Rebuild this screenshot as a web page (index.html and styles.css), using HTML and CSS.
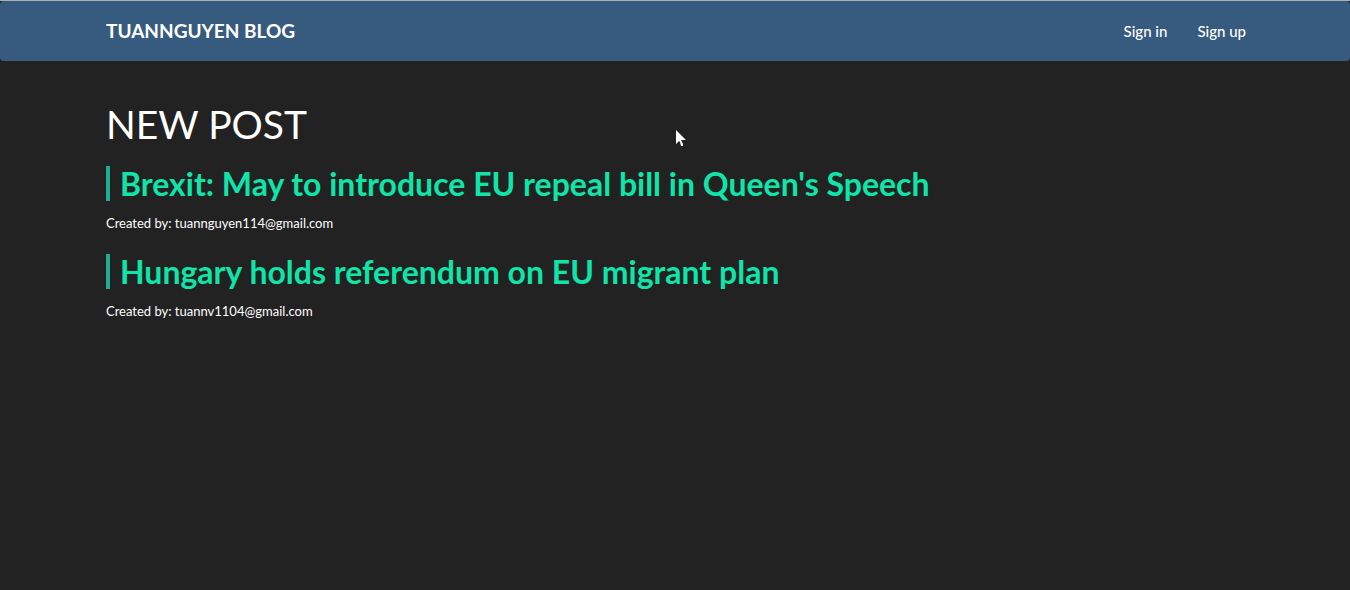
FILE: index.html
```html
<!DOCTYPE html>
<html lang="en">
<head>
<meta charset="utf-8">
<title>TuanNguyen Blog</title>
<link rel="stylesheet" href="styles.css">
</head>
<body>
<header class="navbar">
  <div class="container navbar-inner">
    <a class="brand" href="#">TUANNGUYEN BLOG</a>
    <nav class="nav">
      <a href="#">Sign in</a>
      <a href="#">Sign up</a>
    </nav>
  </div>
</header>
<main class="container">
  <h1 class="page-title">NEW POST</h1>
  <article class="post">
    <h2 class="post-title"><a href="#">Brexit: May to introduce EU repeal bill in Queen's Speech</a></h2>
    <p class="post-meta">Created by: tuannguyen114@gmail.com</p>
  </article>
  <article class="post">
    <h2 class="post-title"><a href="#">Hungary holds referendum on EU migrant plan</a></h2>
    <p class="post-meta">Created by: tuannv1104@gmail.com</p>
  </article>
</main>
<svg class="cursor" width="12" height="19" viewBox="0 0 12 19" aria-hidden="true"><path d="M1 1v14l3-3 1 1 1 4h2v-2l-2-4h5z" fill="#fff"/></svg>
</body>
</html>
```
FILE: styles.css
```css
* { box-sizing: border-box; }
body {
  margin: 0;
  border-top: 1px solid #adb0b0;
  background: #222;
  color: #fff;
  font-family: Lato, "Liberation Sans", sans-serif;
  font-size: 15px;
  line-height: 21px;
}
a { color: inherit; text-decoration: none; }
.container {
  width: 100%;
  max-width: 1170px;
  margin: 0 auto;
  padding: 0 14px 0 16px;
}
.navbar {
  background: #375a7f;
  border-radius: 4px;
}
.navbar-inner {
  display: flex;
  align-items: center;
  justify-content: space-between;
  min-height: 60px;
}
.brand {
  padding-bottom: 2px;
  font-size: 19px;
  font-weight: 700;
}
.nav {
  display: flex;
  gap: 30px;
  font-weight: 500;
}
.page-title {
  margin: 42px 0 20px;
  font-size: 39px;
  font-weight: 400;
  line-height: 43px;
}
.post { margin-bottom: 20px; }
.post-title {
  margin: 0 0 12px;
  padding-left: 10px;
  border-left: 4px solid #20ad96;
  color: #10e4a8;
  font-size: 32px;
  font-weight: 700;
  line-height: 35px;
}
.post-meta { margin: 0; font-size: 13px; }
.cursor { position: absolute; left: 675px; top: 129px; }
```
